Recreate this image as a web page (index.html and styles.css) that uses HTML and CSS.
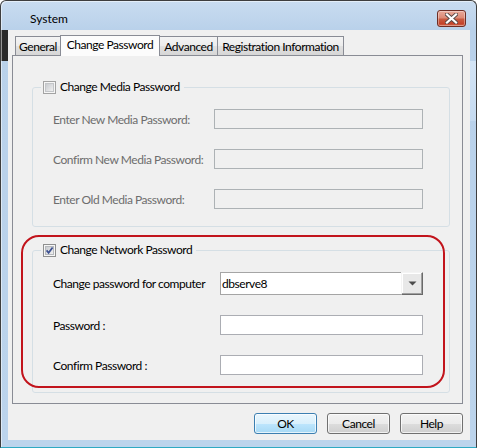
FILE: index.html
```html
<!DOCTYPE html>
<html>
<head>
<meta charset="utf-8">
<link rel="stylesheet" href="styles.css">
</head>
<body>
<div class="window">
  <div class="titlebar">
    <span class="title">System</span>
    <div class="close">
      <svg width="13" height="11" viewBox="0 0 13 11">
        <path d="M2 1.5 L11 9.5 M11 1.5 L2 9.5" stroke="#5a4a48" stroke-width="4" stroke-linecap="square"/>
        <path d="M2 1.5 L11 9.5 M11 1.5 L2 9.5" stroke="#ffffff" stroke-width="2.2" stroke-linecap="square"/>
      </svg>
    </div>
  </div>
  <div class="client">
    <div class="tabs">
      <div class="tab t-general">General</div>
      <div class="tab t-pass active">Change Password</div>
      <div class="tab t-adv">Advanced</div>
      <div class="tab t-reg">Registration Information</div>
    </div>
    <div class="panel">
      <fieldset class="group media">
        <legend>
          <svg class="cb" width="13" height="13" viewBox="0 0 13 13">
            <defs><linearGradient id="g1" x1="0" y1="0" x2="1" y2="1"><stop offset="0" stop-color="#c6c9cd"/><stop offset="1" stop-color="#f2f2f2"/></linearGradient></defs>
            <rect x="0.5" y="0.5" width="12" height="12" fill="#f6f6f6" stroke="#a3a3a3"/>
            <rect x="2.5" y="2.5" width="8" height="8" fill="url(#g1)" stroke="#c3c5c8"/>
          </svg>
          <span>Change Media Password</span>
        </legend>
        <div class="rows rows-media">
          <label class="lbl dim">Enter New Media Password:</label><div class="field off"></div>
          <label class="lbl dim">Confirm New Media Password:</label><div class="field off"></div>
          <label class="lbl dim">Enter Old Media Password:</label><div class="field off"></div>
        </div>
      </fieldset>
      <fieldset class="group net">
        <legend>
          <svg class="cb" width="13" height="13" viewBox="0 0 13 13">
            <defs><linearGradient id="g2" x1="0" y1="0" x2="1" y2="1"><stop offset="0" stop-color="#c6c9cd"/><stop offset="1" stop-color="#f2f2f2"/></linearGradient></defs>
            <rect x="0.5" y="0.5" width="12" height="12" fill="#f6f6f6" stroke="#8e8f8f"/>
            <rect x="2.5" y="2.5" width="8" height="8" fill="url(#g2)" stroke="#b6b9bd"/>
            <path d="M3.6 6.4 L5.6 8.8 L9.6 3.4" fill="none" stroke="#3d5192" stroke-width="1.7"/>
          </svg>
          <span>Change Network Password</span>
        </legend>
        <div class="rows rows-net">
          <label class="lbl">Change password for computer</label>
          <div class="combo"><span class="combo-text">dbserve8</span><span class="drop"><svg width="9" height="5" viewBox="0 0 9 5"><path d="M0.5 0.5 H8.5 L4.5 4.5 Z" fill="#4b4b4b"/></svg></span></div>
          <label class="lbl">Password :</label><div class="field"></div>
          <label class="lbl">Confirm Password :</label><div class="field"></div>
        </div>
      </fieldset>
      <div class="highlight"></div>
    </div>
    <div class="buttons">
      <div class="btn default">OK</div>
      <div class="btn">Cancel</div>
      <div class="btn">Help</div>
    </div>
  </div>
</div>
</body>
</html>
```
FILE: styles.css
```css
html, body {
  margin: 0;
  padding: 0;
  background: #ffffff;
}
body {
  font-family: Lato, "Open Sans", sans-serif;
  font-size: 12px;
  letter-spacing: -0.45px;
  color: #000;
}
.window {
  width: 477px;
  height: 448px;
  box-sizing: border-box;
  border: 1px solid #3e3e3e;
  border-bottom-color: #2fa9c2;
  border-radius: 6px 6px 0 0;
  background:
    linear-gradient(#2a2a2a, #2a2a2a) 0 29px / 7px 31px no-repeat,
    linear-gradient(#d3e4f5, #c5daf0) 469px 60px / 6px 60px no-repeat,
    linear-gradient(#c9dcf0 0, #b9d1ea 29px, #bcd4ec 100%);
  box-shadow: inset 1px 1px 0 rgba(255,255,255,0.5);
  display: flex;
  flex-direction: column;
  overflow: hidden;
}
.titlebar {
  height: 29px;
  display: flex;
  align-items: flex-start;
  flex: none;
}
.title {
  margin-left: 29px;
  margin-top: 10px;
  line-height: 16px;
  font-size: 12px;
  letter-spacing: 0;
}
.close {
  margin-left: auto;
  margin-right: 10px;
  margin-top: 9px;
  width: 29px;
  height: 17px;
  box-sizing: border-box;
  border: 1px solid #6e2e25;
  border-radius: 3px;
  background: linear-gradient(#e9a99a 0%, #dd8b77 45%, #c85a40 55%, #c4432b 85%, #d2694f 100%);
  box-shadow: inset 0 0 0 1px rgba(255,255,255,0.35);
  display: flex;
  align-items: center;
  justify-content: center;
}
.client {
  margin: 0 6px 0 7px;
  height: 410px;
  background: #f0f0f0;
  padding-top: 5px;
  box-sizing: border-box;
}
.tabs {
  display: flex;
  align-items: flex-end;
  height: 20px;
  margin-left: 7px;
}
.tab {
  box-sizing: border-box;
  height: 19px;
  border: 1px solid #898c95;
  border-bottom: none;
  margin-left: -1px;
  background: linear-gradient(#f4f4f4, #ececec 50%, #e1e1e1 50%, #d6d6d6);
  display: flex;
  align-items: center;
  justify-content: center;
  padding-top: 1px;
  white-space: nowrap;
}
.t-general { width: 46px; margin-left: 0; }
.t-pass { width: 100px; }
.t-adv { width: 59px; }
.t-reg { width: 127px; }
.tab.active {
  height: 21px;
  margin-bottom: -1px;
  position: relative;
  z-index: 1;
  background: #fcfcfc;
  padding-top: 0;
  padding-bottom: 3px;
}
.panel {
  position: relative;
  margin-left: 4px;
  width: 451px;
  box-sizing: border-box;
  border: 1px solid #898c95;
  background: #f0f0f0;
  padding: 24px 12px 10px 19px;
}
.group {
  margin: 0;
  padding: 15px 0 17px 0;
  border: 1px solid #d5dfe5;
  border-radius: 3px;
  min-width: 0;
}
.group.net {
  margin-top: 16px;
}
.group legend {
  margin-left: 8px;
  padding: 0 4px 0 2px;
  height: 14px;
  line-height: 14px;
  display: flex;
  align-items: center;
  gap: 4px;
}
.cb {
  display: block;
  flex: none;
}
.rows {
  display: grid;
  padding-left: 20px;
  row-gap: 20px;
  align-items: center;
}
.rows-media {
  grid-template-columns: 161px 209px;
}
.rows-net {
  grid-template-columns: 167px 203px;
}
.lbl {
  white-space: nowrap;
  line-height: 15px;
}
.lbl.dim {
  color: #6d6d6d;
}
.field {
  height: 20px;
  box-sizing: border-box;
  border: 1px solid #abadb3;
  background: #ffffff;
}
.field.off {
  background: #f0f0f0;
  border-color: #adb2b5;
}
.combo {
  height: 23px;
  box-sizing: border-box;
  border: 1px solid #a5a5a5;
  background: #ffffff;
  display: flex;
  align-items: center;
}
.combo-text {
  flex: 1;
  padding-left: 1px;
}
.drop {
  align-self: stretch;
  width: 22px;
  margin: -1px -1px -1px 0;
  box-sizing: border-box;
  border: 1px solid;
  border-color: #f4f4f4 #6a6a6a #6a6a6a #f4f4f4;
  box-shadow: inset -1px -1px 0 #a0a0a0, inset 1px 1px 0 #ffffff;
  background: #e8e8e8;
  display: flex;
  align-items: center;
  justify-content: center;
}
.highlight {
  position: absolute;
  left: 8px;
  top: 179px;
  width: 424px;
  height: 153px;
  box-sizing: border-box;
  border: 2px solid #c2141c;
  border-radius: 18px;
  pointer-events: none;
}
.buttons {
  display: flex;
  justify-content: flex-end;
  gap: 10px;
  margin-top: 9px;
  padding-right: 7px;
}
.btn {
  width: 63px;
  height: 21px;
  box-sizing: border-box;
  border: 1px solid #707070;
  border-radius: 3px;
  background: linear-gradient(#f2f2f2, #ebebeb 50%, #dddddd 50%, #cfcfcf);
  box-shadow: inset 0 0 0 1px rgba(255,255,255,0.7);
  display: flex;
  align-items: center;
  justify-content: center;
}
.btn.default {
  border-color: #3c7fb1;
  background: linear-gradient(#eaf6fd, #d9f0fc 50%, #bee6fd 50%, #a7d9f5);
}
```
